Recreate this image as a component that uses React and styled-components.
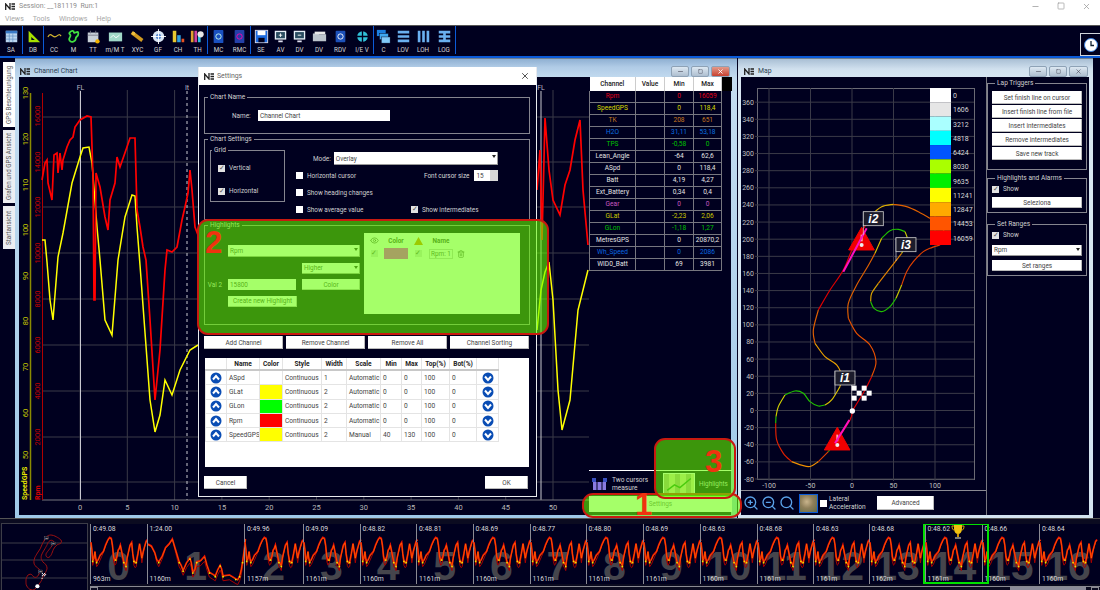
import React from "react";
import styled, { createGlobalStyle } from "styled-components";
import { Eye, Trash2, ZoomIn, ZoomOut, Search, X, Minus, Square } from "lucide-react";

const NAVY = "#00001f";
const LINE = "#85858f";

const GlobalStyle = createGlobalStyle`
  html, body { margin: 0; padding: 0; background: ${NAVY}; }
  body { font-family: Roboto, "Noto Sans", sans-serif; font-size: 6.4px; color: #d8d8d8; }
  fieldset { margin: 0; min-width: 0; }
`;

const Page = styled.div`
  position: relative;
  width: 1100px;
  height: 590px;
  overflow: hidden;
  display: flex;
  flex-direction: column;
  background: ${NAVY};
`;

/* ---------- top chrome ---------- */
const TitleBar = styled.div`
  flex: none;
  height: 12px;
  background: #fff;
  display: flex;
  align-items: center;
  padding: 0 0 0 5px;
  gap: 4px;
  color: #8d8d8d;
  font-size: 7px;
`;
const WinControls = styled.div`
  margin-left: auto;
  display: flex;
  gap: 17px;
  padding-right: 9px;
  color: #999;
`;
const MenuBar = styled.div`
  flex: none;
  height: 13px;
  background: #fff;
  display: flex;
  align-items: center;
  gap: 9px;
  padding-left: 5px;
  color: #a8a8a8;
  font-size: 7px;
`;
const Toolbar = styled.div`
  flex: none;
  box-sizing: content-box;
  height: 30px;
  display: flex;
  background: ${NAVY};
  border-top: 1px solid #555;
  border-bottom: 2px solid #0b5bd8;
`;
const ToolGroup = styled.div`
  display: flex;
  border-right: 1px solid #0b5bd8;
  height: 28px;
`;
const Tool = styled.div`
  width: ${(p) => p.$w}px;
  display: flex;
  flex-direction: column;
  align-items: center;
  padding-top: 3px;
  gap: 2px;
  color: #d5d5d5;
  font-size: 6.3px;
  line-height: 8px;
  white-space: nowrap;
`;
const ClockButton = styled.div`
  margin-left: auto;
  align-self: flex-end;
  width: 19px;
  height: 21px;
  border: 1px solid #cfd3da;
  border-right: 0;
  display: flex;
  align-items: center;
  justify-content: center;
`;

/* ---------- workspace ---------- */
const Workspace = styled.div`
  flex: none;
  height: 460px;
  display: grid;
  grid-template-columns: 15px 722px 1px 355px 7px;
`;
const TabColumn = styled.div`
  display: flex;
  flex-direction: column;
  gap: 3px;
  padding: 4px 0 0 3px;
`;
const Tab = styled.div`
  writing-mode: vertical-rl;
  transform: rotate(180deg);
  width: 12px;
  height: ${(p) => p.$h}px;
  background: ${(p) => (p.$active ? "#fff" : "#eceef2")};
  color: #555;
  font-size: 6.3px;
  display: flex;
  align-items: center;
  justify-content: center;
  white-space: nowrap;
`;
const Window = styled.div`
  display: flex;
  flex-direction: column;
  padding: 0 ${(p) => p.$pr}px 3px ${(p) => p.$pl}px;
  background: ${(p) =>
    p.$active
      ? "linear-gradient(#8fb0d2 0, #b0cbe6 8px, #c4dcf0 20px, #9fc9e8 100%)"
      : "linear-gradient(#a9bfd4 0, #d0e0ee 10px, #d8e6f2 20px, #d3e3ef 100%)"};
  border-top: 1px solid #6f7f92;
`;
const WindowTitle = styled.div`
  flex: none;
  box-sizing: border-box;
  height: 18px;
  padding: 6px 0 0 ${(p) => p.$pl || 1}px;
  display: flex;
  align-items: center;
  gap: 4px;
  color: #2d3e52;
  font-size: 6.9px;
`;
const WindowButtons = styled.div`
  margin-left: auto;
  display: flex;
  gap: 2px;
  margin-right: 1px;
`;
const WindowButton = styled.div`
  width: ${(p) => (p.$wide ? 19 : 18)}px;
  height: 11px;
  border-radius: 2px;
  border: 1px solid #8ea2b6;
  box-sizing: border-box;
  background: ${(p) => (p.$close ? "linear-gradient(#e49a8a,#c8412f)" : "linear-gradient(#dde8f2,#aebfd0)")};
  color: ${(p) => (p.$close ? "#fff" : "#445")};
  display: flex;
  align-items: center;
  justify-content: center;
`;
const WindowBody = styled.div`
  flex: 1;
  min-height: 0;
  display: flex;
  background: ${NAVY};
`;
const ChartCanvas = styled.svg`
  width: 570px;
  height: 438px;
  display: block;
  flex: none;
`;
const ChannelPanel = styled.div`
  flex: 1;
  display: flex;
  flex-direction: column;
`;
const ChannelTable = styled.table`
  border-collapse: collapse;
  table-layout: fixed;
  width: 142px;
  font-size: 6.6px;
  th {
    height: 13.5px;
    background: #fff;
    color: #222;
    font-weight: 500;
    padding: 0;
    border-right: 1px solid #ccc;
  }
  td {
    height: 11px;
    padding: 0;
    text-align: center;
    border: 1px solid #77777f;
    border-top: 0;
    white-space: nowrap;
  }
`;
const BlackHead = styled.th`
  && {
    background: #000;
    border: 0;
  }
`;
const ChannelCell = styled.td`
  && {
    color: ${(p) => p.$c};
  }
`;
const PanelFoot = styled.div`
  margin-top: auto;
  display: flex;
  flex-direction: column;
`;
const FootRow = styled.div`
  height: 25px;
  border-top: 1px solid #fff;
  display: flex;
  align-items: center;
  padding-left: 2px;
  gap: 4px;
  line-height: 8px;
  color: #d5d5d5;
`;
const TwoCursorsLabel = styled.span`
  width: 41px;
  white-space: nowrap;
  font-size: 6.6px;
`;
const HighlightsThumb = styled.svg`
  margin-left: 6px;
  width: 32px;
  height: 22px;
  flex: none;
  background: repeating-linear-gradient(90deg, #b8a890 0 5px, #e8d8b0 5px 11px);
  border: 1px solid #fff;
  box-sizing: border-box;
`;
const SettingsButton = styled.div`
  height: 16px;
  margin: 0 0 3px 0;
  background: #fff;
  color: #777;
  display: flex;
  align-items: center;
  justify-content: center;
`;

/* ---------- map window ---------- */
const MapColumn = styled.div`
  width: 245px;
  display: flex;
  flex-direction: column;
`;
const MapCanvas = styled.svg`
  width: 245px;
  height: 413px;
  display: block;
`;
const MapTools = styled.div`
  flex: 1;
  border-top: 1px solid #8a8a92;
  display: flex;
  align-items: center;
  padding-left: 2px;
  gap: 2px;
  color: #5aa2ea;
`;
const SatThumb = styled.div`
  width: 17px;
  height: 17px;
  margin-left: 2px;
  border: 1px solid #0b5bd8;
  background: radial-gradient(circle at 40% 40%, #c9b48c 0, #8f7f5a 45%, #5f6a48 100%);
`;
const LateralLabel = styled.div`
  width: 46px;
  color: #d5d5d5;
  line-height: 8px;
  font-size: 6.6px;
`;
const SidePanel = styled.div`
  flex: 1;
  border-left: 1px solid #77777f;
  padding: 1px 2px 0 0;
  display: flex;
  flex-direction: column;
  gap: 3px;
`;
const Group = styled.fieldset`
  border: 1px solid ${LINE};
  padding: ${(p) => p.$pad || "3px 4px"};
  margin-top: ${(p) => p.$mt ?? 0}px;
  height: ${(p) => (p.$h ? `${p.$h}px` : "auto")};
  box-sizing: border-box;
  display: flex;
  flex-direction: column;
  gap: ${(p) => p.$gap ?? 0}px;
  legend {
    padding: 0 2px;
    margin-left: 3px;
    font-size: 6.6px;
    line-height: 10px;
    color: #d0d0d0;
  }
`;
const GridBox = styled(Group)`
  width: 75px;
  margin-left: 5px;
  legend {
    margin-left: 1px;
  }
`;
const Btn = styled.div`
  flex: ${(p) => (p.$grow ? 1 : "none")};
  height: ${(p) => p.$h || 13}px;
  width: ${(p) => (p.$w ? `${p.$w}px` : "auto")};
  background: #fff;
  box-shadow: inset -1px -1px 0 #bbb;
  color: #444;
  font-size: 6.4px;
  display: flex;
  align-items: center;
  justify-content: center;
  white-space: nowrap;
`;
const CheckRow = styled.div`
  display: flex;
  align-items: center;
  gap: 4px;
  height: 10px;
  color: #cfcfcf;
  white-space: nowrap;
`;
const Box = styled.span`
  width: 7px;
  height: 7px;
  flex: none;
  box-sizing: border-box;
  background: ${(p) => (p.$checked ? "#e2e2e2" : "#fff")};
  color: #555;
  font-size: 7px;
  line-height: 7px;
  text-align: center;
  &::after {
    content: "${(p) => (p.$checked ? "✓" : "")}";
  }
`;
const Select = styled.div`
  position: relative;
  height: ${(p) => p.$h || 11}px;
  width: ${(p) => (p.$w ? `${p.$w}px` : "auto")};
  background: #fff;
  color: #444;
  display: flex;
  align-items: center;
  padding-left: 2px;
  box-sizing: border-box;
  box-shadow: inset -1px -1px 0 #999;
  &::after {
    content: "";
    position: absolute;
    right: 2px;
    top: 3px;
    border: 2.5px solid transparent;
    border-top: 3px solid #222;
    border-bottom: 0;
  }
`;

/* ---------- settings dialog ---------- */
const Dialog = styled.div`
  position: absolute;
  left: 198px;
  top: 67px;
  width: 339px;
  height: 430px;
  background: ${NAVY};
  border: 1px solid #e8eaee;
  border-top: 0;
  box-sizing: border-box;
  display: flex;
  flex-direction: column;
`;
const DialogTitle = styled.div`
  height: 18px;
  flex: none;
  background: #fff;
  color: #666;
  display: flex;
  align-items: center;
  gap: 3px;
  padding: 0 6px 0 5px;
  font-size: 6.9px;
`;
const DialogClose = styled.span`
  margin-left: auto;
  color: #333;
  line-height: 0;
`;
const DialogBody = styled.div`
  flex: 1;
  padding: 7px 6px 0 5px;
  display: flex;
  flex-direction: column;
`;
const Label = styled.span`
  color: #d0d0d0;
  text-align: ${(p) => p.$align || "left"};
  width: ${(p) => (p.$w ? `${p.$w}px` : "auto")};
  white-space: nowrap;
`;
const TextInput = styled.div`
  height: ${(p) => p.$h || 11}px;
  width: ${(p) => p.$w}px;
  background: #fff;
  color: #444;
  display: flex;
  align-items: center;
  padding-left: 2px;
  box-sizing: border-box;
`;
const NameRow = styled.div`
  display: flex;
  align-items: center;
  gap: 4px;
  padding: 8px 0 0 27px;
`;
const SettingsRow = styled.div`
  display: flex;
  margin-top: 1px;
`;
const GridChecks = styled.div`
  display: flex;
  flex-direction: column;
  gap: 13px;
  padding: 8px 0 0 7px;
`;
const SettingsGrid = styled.div`
  margin-left: 11px;
  width: 201px;
  display: grid;
  grid-template-columns: 115px 1fr;
  align-items: center;
  grid-auto-rows: 17px;
  padding-top: 5px;
`;
const ModeRow = styled.div`
  grid-column: 1 / 3;
  display: flex;
  align-items: center;
  gap: 3px;
  padding-left: 17px;
`;
const CursorSize = styled.div`
  display: flex;
  align-items: center;
  gap: 5px;
  margin-left: 13px;
  white-space: nowrap;
`;
const Spin = styled.div`
  width: 24px;
  height: 11px;
  background: #fff;
  color: #444;
  flex: none;
  padding-left: 2px;
  box-sizing: border-box;
  display: flex;
  align-items: center;
  border-right: 8px solid #d8d8d8;
`;
const HighlightsRow = styled.div`
  display: flex;
  gap: 4px;
  padding: 3px 0 0 0;
`;
const HighlightsForm = styled.div`
  width: 155px;
  display: flex;
  flex-direction: column;
  padding-top: 12px;
  gap: 5.5px;
`;
const FormRow = styled.div`
  display: flex;
  align-items: center;
  justify-content: ${(p) => (p.$end ? "flex-end" : "flex-start")};
  gap: ${(p) => p.$gap ?? 0}px;
  margin-left: ${(p) => p.$ml ?? 0}px;
`;
const RuleBox = styled.div`
  width: 156px;
  height: 81px;
  background: #fff;
  color: #555;
`;
const RuleGrid = styled.div`
  display: grid;
  grid-template-columns: 20px 24px 20px 26px 14px;
  grid-auto-rows: 13px;
  align-items: center;
  justify-items: center;
  padding-top: 1px;
`;
const RuleHead = styled.span`
  font-weight: 700;
  color: #444;
`;
const Swatch = styled.div`
  width: 100%;
  height: 11px;
  background: ${(p) => p.$c};
`;
const NameField = styled.div`
  border: 1px solid #ccc;
  padding: 0 1px;
  white-space: nowrap;
`;
const ButtonRow = styled.div`
  margin-top: 11px;
  display: flex;
  gap: 3px;
  padding-right: 1px;
`;
const TableWrap = styled.div`
  margin: 9px 0 0 1px;
  height: 109px;
  width: 324px;
  background: #fff;
  flex: none;
`;
const SeriesTable = styled.table`
  border-collapse: collapse;
  table-layout: fixed;
  width: 293px;
  color: #444;
  font-size: 6.6px;
  th {
    height: 11px;
    padding: 0;
    color: #222;
    font-weight: 700;
    text-align: center;
    border-right: 1px solid #e4e4e4;
    border-bottom: 2px solid #c8c8c8;
  }
  td {
    height: 13.3px;
    padding: 0 0 0 2px;
    white-space: nowrap;
    overflow: hidden;
    border: 1px solid #e4e4e4;
  }
`;
const ColorCell = styled.td`
  && {
    background: ${(p) => p.$c};
  }
`;
const ArrowCell = styled.td`
  && {
    padding: 0;
    text-align: center;
    line-height: 0;
  }
`;
const DialogFoot = styled.div`
  margin-top: 9px;
  display: flex;
  justify-content: space-between;
  padding-right: 2px;
`;

/* ---------- callouts laid over the screenshot ---------- */
const Callout = styled.div`
  position: absolute;
  left: ${(p) => p.$x}px;
  top: ${(p) => p.$y}px;
  width: ${(p) => p.$w}px;
  height: ${(p) => p.$h}px;
  box-sizing: border-box;
  border: 2px solid #c81a10;
  border-radius: 11px;
  background: rgba(102, 255, 0, 0.59);
`;
const CalloutNumber = styled.span`
  position: absolute;
  left: ${(p) => p.$x}px;
  top: ${(p) => p.$y}px;
  color: #f0320f;
  font-family: "Liberation Sans", Arial, sans-serif;
  font-weight: 700;
  font-size: 31px;
  line-height: 31px;
`;

/* ---------- bottom lap strip ---------- */
const BottomStrip = styled.div`
  flex: none;
  box-sizing: border-box;
  height: 72px;
  overflow: hidden;
  display: flex;
  gap: 3px;
  padding: 5px 0 0 2px;
  border-top: 1px solid #555;
  background: #0b0b20;
`;
const MiniTrack = styled.svg`
  width: 85px;
  height: 67px;
  flex: none;
  background: ${NAVY};
  box-shadow: 0 0 0 1px #3d3d48;
`;
const LapColumn = styled.div`
  flex: 1;
  min-width: 0;
  display: flex;
  flex-direction: column;
  gap: 2px;
  overflow: hidden;
`;
const LapRow = styled.div`
  display: flex;
  flex: none;
  height: 60px;
  background: ${NAVY};
`;
const Lap = styled.div`
  position: relative;
  flex: none;
  width: ${(p) => p.$w}px;
  height: 60px;
  box-sizing: border-box;
  border-left: 1px solid #8a8a92;
  padding: 1px 0 1px 2px;
  display: flex;
  flex-direction: column;
  justify-content: space-between;
  color: #d8d8d8;
  font-size: 6.8px;
  line-height: 8px;
`;
const LapNumber = styled.span`
  position: absolute;
  left: 0;
  right: 0;
  bottom: -3px;
  text-align: center;
  color: #45454c;
  font-family: "Liberation Sans", Arial, sans-serif;
  font-weight: 700;
  font-size: 41px;
  line-height: 41px;
`;
const LapTrace = styled.svg`
  position: absolute;
  left: 0;
  top: 0;
  width: 100%;
  height: 100%;
  overflow: visible;
`;
const LapText = styled.span`
  position: relative;
  z-index: 1;
`;
const BestBox = styled.div`
  position: absolute;
  left: -3px;
  top: -1px;
  width: 66px;
  height: 61px;
  box-sizing: border-box;
  border: 2px solid #00e000;
  z-index: 2;
`;
const TrophyIcon = styled.svg`
  position: absolute;
  left: 26px;
  top: -1px;
`;
const ScrollTrack = styled.div`
  flex: none;
  height: 5px;
  border-top: 1px solid #8a8a92;
  display: flex;
  justify-content: space-between;
  padding-right: 1px;
`;
const ScrollEnd = styled.div`
  width: 8px;
  border: 1px solid #8a8a92;
  border-bottom: 0;
  box-sizing: border-box;
`;
const ScrollThumb = styled.div`
  width: 76px;
  margin-left: auto;
  margin-right: 5px;
  background: #8a8a98;
`;

/* ---------- small drawings ---------- */
const Logo = ({ color = "#222" }) => (
  <svg width="10" height="7" viewBox="0 0 10 7" fill="none" stroke={color} strokeWidth="1.3">
    <path d="M.7 7V1L5 6V0" />
    <path d="M6.5 1H10M6.5 3.5H10M6.5 6H10" />
  </svg>
);

const shapes = {
  SA: (<><rect x="2" y="2" width="13" height="13" fill="#bcd6f0" /><rect x="2" y="2" width="13" height="3" fill="#3a7ac8" /><path d="M2 8h13M2 11.500h13M6 5v10M10 5v10" stroke="#5a8ac0" strokeWidth=".7" /></>),
  DB: (<><path d="M3 2v13h13z" fill="#a8e000" /><path d="M6 9v3.500h4z" fill="#00001f" /></>),
  CC: (<path d="M1 9c3-6 5 0 8 0s4-5 7-1" stroke="#d8b830" strokeWidth="1.300" fill="none" />),
  M: (<path d="M4 4c3-3 5-2 5 0s5-3 5 1-3 3-3 6-5 5-7 2 2-4 1-6-2-2-1-3z" stroke="#40e040" strokeWidth="2" fill="none" />),
  TT: (<><rect x="2" y="4" width="12" height="11" fill="#c8d0d8" /><path d="M2 7h12M5 2v3M11 2v3" stroke="#778" /><circle cx="13" cy="14" r="2.500" fill="#f0b000" /></>),
  MMT: (<><rect x="1" y="4" width="15" height="10" fill="#a0d8c8" /><path d="M3 10l3-3 3 3 4-3" stroke="#fff" fill="none" /></>),
  XYC: (<><path d="M2 4l12 9" stroke="#d09a20" strokeWidth="4" /><circle cx="4" cy="5" r="2" fill="#f0c040" /></>),
  GF: (<><circle cx="8.500" cy="8.500" r="6.500" fill="#d8e4f4" /><circle cx="8.500" cy="8.500" r="3" fill="#5a8ad0" /><path d="M8.500 0v17M0 8.500h17" stroke="#fff" /></>),
  CH: (<><rect x="2" y="2" width="4" height="13" fill="#e8c830" /><rect x="7" y="7" width="4" height="8" fill="#30a0e0" /><rect x="12" y="11" width="3" height="4" fill="#e85020" /></>),
  TH: (<><rect x="1" y="2" width="3" height="13" fill="#e0a030" /><rect x="5" y="2" width="3" height="13" fill="#d040a0" /><rect x="9" y="6" width="3" height="9" fill="#30c0e0" /><circle cx="12" cy="6" r="3.500" fill="#e8e8e8" /></>),
  MC: (<><rect x="3" y="1" width="11" height="15" rx="1" fill="#1a50c0" /><circle cx="8.500" cy="8.500" r="3" stroke="#cfe" fill="none" /></>),
  RMC: (<><rect x="3" y="1" width="11" height="15" rx="1" fill="#2440a8" /><circle cx="8.500" cy="8.500" r="3" stroke="#f0a" fill="none" /></>),
  SE: (<><rect x="1.500" y="1.500" width="14" height="14" fill="#1c6ae0" stroke="#dde" /><rect x="4" y="2" width="9" height="5" fill="#fff" /><rect x="5" y="10" width="7" height="5" fill="#00001f" /></>),
  AV: (<><rect x="2" y="2" width="13" height="10" fill="#e8f0f8" /><rect x="3.500" y="3.500" width="10" height="7" fill="#2a4c60" /><path d="M8.500 5v4M6.500 7h4" stroke="#fff" /><path d="M6 14h5" stroke="#dde" strokeWidth="2" /></>),
  DV: (<><rect x="2" y="2" width="13" height="10" fill="#e8f0f8" /><rect x="3.500" y="3.500" width="10" height="7" fill="#2a4c60" /><path d="M6.500 7h4" stroke="#fff" /><path d="M6 14h5" stroke="#dde" strokeWidth="2" /></>),
  FO: (<><path d="M1 5h6l1 1h8v8H1z" fill="#bcc4cc" /><rect x="3" y="3" width="12" height="3" fill="#e8e8e8" /></>),
  RDV: (<><rect x="3" y="2" width="11" height="13" rx="1" fill="#1c50b8" /><circle cx="8.500" cy="8.500" r="3" stroke="#fff" fill="none" /></>),
  IEV: (<><circle cx="8.500" cy="8.500" r="6" fill="#30c0d8" /><path d="M8.500 1v15M2 8.500h13" stroke="#00001f" strokeWidth="1.500" /></>),
  C: (<><rect x="1" y="1" width="10" height="7" fill="#1c80e0" /><rect x="4" y="5" width="10" height="7" fill="#40a8f0" stroke="#00001f" strokeWidth=".5" /><rect x="6" y="9" width="10" height="7" fill="#80c8f8" stroke="#00001f" strokeWidth=".5" /></>),
  LOV: (<path d="M2 3.500h13M2 8.500h13M2 13.500h13" stroke="#6ab0f0" strokeWidth="3" />),
  LOH: (<path d="M3.500 2v13M8.500 2v13M13.500 2v13" stroke="#6ab0f0" strokeWidth="3" />),
  LOG: (<path d="M2 3.500h13M2 8.500h13M2 13.500h13M8.500 2v13" stroke="#6ab0f0" strokeWidth="3" />),
};

const toolGroups = [
  [["SA", "SA", 22]],
  [["DB", "DB", 20]],
  [["CC", "CC", 20], ["M", "M", 19], ["TT", "TT", 20], ["m/M T", "MMT", 24], ["XYC", "XYC", 21], ["GF", "GF", 20], ["CH", "CH", 20], ["TH", "TH", 19]],
  [["MC", "MC", 21], ["RMC", "RMC", 21]],
  [["SE", "SE", 20], ["AV", "AV", 19], ["DV", "DV", 19], ["DV", "FO", 20], ["RDV", "RDV", 22], ["I/E V", "IEV", 22]],
  [["C", "C", 19], ["LOV", "LOV", 20], ["LOH", "LOH", 20], ["LOG", "LOG", 22]],
];

const ArrowDot = ({ down }) => (
  <svg width="12" height="12" viewBox="0 0 12 12">
    <circle cx="6" cy="6" r="5.500" fill="#0a4db4" />
    <path d={down ? "M3 4.500L6 8l3-3.500" : "M3 7.500L6 4l3 3.500"} fill="none" stroke="#fff" strokeWidth="2" />
  </svg>
);

/* smooth line through points, used for the track */
const smooth = (pts) => {
  let d = `M${pts[0][0]} ${pts[0][1]}`;
  for (let i = 0; i < pts.length - 1; i++) {
    const p0 = pts[i - 1] || pts[i];
    const p1 = pts[i];
    const p2 = pts[i + 1];
    const p3 = pts[i + 2] || p2;
    const c1 = [p1[0] + (p2[0] - p0[0]) / 6, p1[1] + (p2[1] - p0[1]) / 6];
    const c2 = [p2[0] - (p3[0] - p1[0]) / 6, p2[1] - (p3[1] - p1[1]) / 6];
    d += `C${c1[0]} ${c1[1]} ${c2[0]} ${c2[1]} ${p2[0]} ${p2[1]}`;
  }
  return d;
};
const line = (pts) => pts.map((p) => p.join(",")).join(" ");

/* ---------- chart data ---------- */
const redLeft = [[42,180],[45,163],[47,160],[48,183],[52,200],[53,177],[54,155],[57,153],[58,173],[60,153],[62,170],[63,160],[67,147],[70,140],[73,137],[75,127],[80,120],[87,116],[91,117],[93,177],[94,300],[95,300],[96,173],[100,187],[105,217],[108,230],[110,200],[115,183],[117,157],[120,167],[127,147],[130,138],[135,138],[137,210],[140,227],[143,247],[146,260],[150,320],[155,400],[160,350],[165,270],[167,250],[172,252],[177,247],[182,220],[185,207],[188,193],[190,170],[192,190],[195,227],[198,235]];
const redRight = [[537,190],[540,150],[542,240],[545,118],[549,170],[553,200],[560,215],[565,185],[570,170],[575,140],[580,120],[583,190],[588,245]];
const yellowLeft = [[42,240],[45,240],[47,262],[50,300],[53,320],[58,257],[63,233],[72,183],[80,157],[83,148],[89,147],[92,163],[97,227],[100,260],[105,320],[112,335],[118,260],[125,217],[132,195],[135,196],[137,227],[140,265],[150,400],[155,432],[160,415],[165,380],[172,395],[180,370],[190,350],[198,345]];
const yellowRight = [[537,330],[541,290],[545,272],[549,262],[553,300],[558,390],[562,430],[570,400],[578,310],[588,270]];
const yellowTicks = [[130,93],[120,139],[110,185],[100,230],[90,276],[80,321],[70,367],[60,413],[50,455]];
const redTicks = [[16000,116],[14000,162],[12000,207],[10000,253],[8000,299],[6000,345],[4000,391],[2000,437]];
const xTicks = [0,5,10,15,20,25,30,35,40,45,50];

const ChannelChart = () => (
  <ChartCanvas viewBox="19 77 570 438" fontFamily="Roboto, sans-serif">
    {[117,162,207,253,299,345,391,437,482].map((y) => (
      <line key={y} x1="42" x2="589" y1={y} y2={y} stroke="#3a3a48" />
    ))}
    {xTicks.map((t) => (
      <line key={t} x1={80 + t * 9.46} x2={80 + t * 9.46} y1="90" y2="500" stroke="#3a3a48" />
    ))}
    <line x1="80.500" x2="80.500" y1="91" y2="500" stroke="#c8c8d0" />
    <line x1="541" x2="541" y1="91" y2="500" stroke="#c8c8d0" />
    <line x1="187" x2="187" y1="91" y2="500" stroke="#c8c8d0" strokeDasharray="3 3" />
    <text x="80.500" y="90" textAnchor="middle" fontSize="7" fill="#b8b8c8">FL</text>
    <text x="187" y="90" textAnchor="middle" fontSize="7" fill="#b8b8c8">It</text>
    <text x="541" y="90" textAnchor="middle" fontSize="7" fill="#b8b8c8">FL</text>
    <line x1="42" x2="589" y1="500" y2="500" stroke="#77777f" />
    <line x1="30.500" x2="30.500" y1="93" y2="500" stroke="#8a8a00" strokeWidth="1.500" />
    <line x1="42.500" x2="42.500" y1="93" y2="500" stroke="#b00000" />
    {yellowTicks.map(([v, y]) => (
      <text key={v} transform={`rotate(-90 28 ${y})`} x="28" y={y} textAnchor="middle" fontSize="7.500" fill="#c8c800">{v}</text>
    ))}
    {redTicks.map(([v, y]) => (
      <text key={v} transform={`rotate(-90 40 ${y})`} x="40" y={y} textAnchor="middle" fontSize="7.500" fill="#c00000">{v}</text>
    ))}
    {xTicks.map((t) => (
      <text key={t} x={80 + t * 9.46} y="510" textAnchor="middle" fontSize="7.500" fill="#b8b8b8">{t}</text>
    ))}
    <text transform="rotate(-90 27 500)" x="27" y="500" fontSize="7" fontWeight="700" fill="#e8e800">SpeedGPS</text>
    <text transform="rotate(-90 40 500)" x="40" y="500" fontSize="7" fontWeight="700" fill="#e00000">Rpm</text>
    <polyline points={line(yellowLeft)} fill="none" stroke="#ffff00" strokeWidth="1.500" />
    <polyline points={line(yellowRight)} fill="none" stroke="#ffff00" strokeWidth="1.500" />
    <polyline points={line(redLeft)} fill="none" stroke="#ff0000" strokeWidth="1.700" />
    <polyline points={line(redRight)} fill="none" stroke="#ff0000" strokeWidth="1.700" />
  </ChartCanvas>
);

const channels = [
  ["Rpm", "0", "16059", "#e00018"],
  ["SpeedGPS", "0", "118,4", "#d8d800"],
  ["TK", "208", "651", "#c87820"],
  ["H2O", "31,11", "53,18", "#0a70e0"],
  ["TPS", "-0,58", "0", "#00c000"],
  ["Lean_Angle", "-64", "62,6", "#e4e4e4"],
  ["ASpd", "0", "118,4", "#e4e4e4"],
  ["Batt", "4,19", "4,27", "#e4e4e4"],
  ["Ext_Battery", "0,34", "0,4", "#e4e4e4"],
  ["Gear", "0", "0", "#c858c0"],
  ["GLat", "-2,23", "2,06", "#c8c800"],
  ["GLon", "-1,18", "1,27", "#00c000"],
  ["MetresGPS", "0", "20870,2", "#e4e4e4"],
  ["Wh_Speed", "0", "2086", "#0a68e0"],
  ["WID0_Batt", "69", "3981", "#e4e4e4"],
];

/* ---------- map data (coordinates of a 3x crop, origin 750,190) ---------- */
const trackRuns = [
  ["#e00000", [[307,663],[345,600],[365,560]]],
  ["#e85000", [[365,560],[378,515],[360,465],[320,430],[295,385]]],
  ["#e06000", [[295,385],[295,340],[320,285],[350,235],[375,190]]],
  ["#d8c000", [[375,190],[395,145]]],
  ["#20c000", [[395,145],[420,122],[445,118],[465,125]]],
  ["#c8c800", [[465,125],[472,150],[455,190]]],
  ["#e08000", [[455,190],[420,235],[385,280]]],
  ["#d8a000", [[385,280],[365,310],[362,335]]],
  ["#20c000", [[362,335],[372,355],[395,365],[420,350],[438,325]]],
  ["#c8c800", [[438,325],[455,285]]],
  ["#e04000", [[455,285],[470,245],[490,215],[520,185],[540,175],[570,165]]],
  ["#e04000", [[570,165],[585,130],[560,100],[540,85]]],
  ["#e06000", [[540,85],[510,68],[470,50],[430,43]]],
  ["#e0b000", [[430,43],[395,50],[365,75],[350,100]]],
  ["#e00000", [[350,100],[310,170],[280,240],[240,300],[205,360]]],
  ["#e06000", [[205,360],[190,420],[195,460]]],
  ["#e8a000", [[195,460],[225,500],[260,525],[275,560],[270,590]]],
  ["#d8c000", [[270,590],[245,630],[225,645]]],
  ["#20c000", [[225,645],[205,648],[180,635],[160,610],[135,603],[105,615]]],
  ["#d0d000", [[105,615],[85,650],[78,680]]],
  ["#20c000", [[78,680],[77,700]]],
  ["#e02000", [[77,700],[80,750],[100,790],[125,815]]],
  ["#f09000", [[125,815],[175,830],[205,815]]],
  ["#e04000", [[205,815],[235,785]]],
  ["#20c000", [[235,785],[255,760]]],
  ["#e00000", [[255,760],[300,690],[307,663]]],
];

const TrackLine = ({ width, color }) =>
  trackRuns.map(([c, pts], i) => (
    <path key={i} d={smooth(pts)} fill="none" stroke={color || c} strokeWidth={width} />
  ));

const Flag = ({ x, y, label }) => (
  <g>
    <path d={`M${x} ${y}v70`} stroke="#ddd" strokeWidth="2" />
    <rect x={x} y={y} width="60" height="42" fill="#1c1c2c" stroke="#c8c8c8" strokeWidth="2.500" />
    <text x={x + 30} y={y + 33} textAnchor="middle" fontFamily="Liberation Sans, sans-serif" fontStyle="italic" fontWeight="700" fontSize="36" fill="#fff">{label}</text>
  </g>
);

const Checker = () => (
  <g>
    <path d="M305 585v78" stroke="#ddd" strokeWidth="2" />
    {[0, 1, 2].map((r) =>
      [0, 1, 2, 3].map((c) =>
        (r + c) % 2 === 0 ? (
          <rect key={`${r}${c}`} x={305 + c * 15} y={587 + r * 15} width="15" height="15" fill="#fff" />
        ) : null
      )
    )}
    <circle cx="307" cy="663" r="8" fill="#fff" />
  </g>
);

const Warning = ({ x, y }) => (
  <g>
    <path d={`M${x} ${y}L${x + 38} ${y + 68}H${x - 39}z`} fill="#f00000" stroke="#f00000" strokeWidth="3" strokeLinejoin="round" />
    <rect x={x - 3} y={y + 22} width="6" height="20" fill="#f8b0b0" />
    <circle cx={x} cy={y + 53} r="6" fill="#eee" />
  </g>
);

const legend = [
  ["#ffffff", "0"], ["#e6e6e6", "1606"], ["#aaffff", "3212"], ["#00ffff", "4818"],
  ["#0055ff", "6424"], ["#aaff00", "8030"], ["#00ee00", "9635"], ["#ffff00", "11241"],
  ["#ffaa00", "12847"], ["#ff5500", "14453"], ["#ff0000", "16059"],
];
const mapY = Array.from({ length: 23 }, (_, i) => 360 - i * 20);
const yOf = (v) => 410.5 - v * 0.8565;

const TrackMap = () => (
  <MapCanvas viewBox="741 77 245 413" fontFamily="Roboto, sans-serif">
    <rect x="757.500" y="88.500" width="217" height="391" fill="none" stroke="#6a6a74" />
    {mapY.map((v) => (
      <g key={v}>
        <line x1="755" x2="974" y1={yOf(v)} y2={yOf(v)} stroke="#3a3a48" />
        <text x="754" y={yOf(v) + 2.500} textAnchor="end" fontSize="7" fill="#c0c0c0">{v}</text>
      </g>
    ))}
    {[-100, -50, 0, 50, 100].map((v) => (
      <g key={v}>
        <line x1={852 + v * 0.83} x2={852 + v * 0.83} y1="88" y2="481" stroke="#3a3a48" />
        <text x={852 + v * 0.83} y="488" textAnchor="middle" fontSize="7" fill="#c0c0c0">{v}</text>
      </g>
    ))}
    <g transform="translate(750 190) scale(.3333)">
      <TrackLine width="3.500" />
      <Warning x={335} y={112} />
      <Warning x={262} y={712} />
      <path d="M350 115L280 245M298 690L255 760" stroke="#ff10c0" strokeWidth="6" />
      <Flag x={255} y={543} label="i1" />
      <Flag x={340} y={65} label="i2" />
      <Flag x={438} y={143} label="i3" />
      <Checker />
    </g>
    {legend.map(([c, v], i) => (
      <g key={v}>
        <rect x="930" y={88 + i * 14.27} width="21" height="14.300" fill={c} />
        <text x="953" y={98 + i * 14.27} fontSize="7" fill="#d8d8d8">{v}</text>
      </g>
    ))}
  </MapCanvas>
);

/* ---------- lap strip data ---------- */
const lapProfile = [[0,.2],[.03,.9],[.07,.55],[.1,.95],[.16,.7],[.22,.55],[.3,.1],[.36,.05],[.4,.75],[.44,.85],[.48,.5],[.52,.3],[.58,.95],[.62,1.1],[.66,.6],[.72,.2],[.76,.9],[.8,.95],[.86,.25],[.9,.8],[.95,.35],[1,.1]];
const longLap = [[0,.27],[.07,.6],[.11,.95],[.18,.4],[.25,.07],[.32,.95],[.36,1.28],[.43,.81],[.46,1.35],[.5,.95],[.58,.74],[.63,1.35],[.69,1.49],[.74,1.08],[.77,1.49],[.9,1.6],[.94,1.49],[.97,.95],[1,.07]];

const laps = [
  [0, 56.5, "0:49.08", "963m"], [1, 97.5, "1:24.00", "1160m"], [2, 58.5, "0:49.96", "1157m"],
  [3, 57, "0:49.09", "1161m"], [4, 56.5, "0:48.82", "1160m"], [5, 56.5, "0:48.81", "1161m"],
  [6, 57, "0:48.69", "1160m"], [7, 56, "0:48.77", "1161m"], [8, 57, "0:48.80", "1161m"],
  [9, 57, "0:48.69", "1161m"], [10, 57, "0:48.63", "1160m"], [11, 56.5, "0:48.68", "1161m"],
  [12, 55.5, "0:48.63", "1161m"], [13, 56, "0:48.68", "1162m"], [14, 57, "0:48.62", "1161m"],
  [15, 57.5, "0:48.66", "1160m"], [16, 57, "0:48.64", "1160m"],
];

/* adds a jittered point between neighbours so the trace looks sampled */
const jagged = (pts, seed) =>
  pts.flatMap((p, i) => {
    const next = pts[i + 1];
    if (!next) return [p];
    const jitter = (((i * 13 + seed * 7) % 7) - 3) * 0.8;
    return [p, [(p[0] + next[0]) / 2, (p[1] + next[1]) / 2 + jitter]];
  });

const Trace = ({ w, data, seed }) => {
  const base = data.map(([x, y]) => [x * w, 13 + y * 26]);
  const pts = jagged(base, seed);
  const deep = jagged(base.map(([x, y]) => [x, y + (y > 30 ? 5 : 1)]), seed + 2);
  const low = base.filter(([, y]) => y > 34);
  return (
    <LapTrace>
      <polyline points={line(deep)} fill="none" stroke="#a80000" strokeWidth="1" />
      <polyline points={line(pts)} fill="none" stroke="#f01000" strokeWidth="1.600" />
      <polyline points={line(pts.map(([x, y]) => [x, y + 0.6]))} fill="none" stroke="#ff9000" strokeWidth=".5" />
      {low.map(([x, y], i) => (
        <circle key={i} cx={x} cy={y + 1} r=".9" fill="#e8e800" />
      ))}
    </LapTrace>
  );
};

const Trophy = () => (
  <TrophyIcon width="14" height="17" viewBox="0 0 14 17">
    <path d="M3 1h8v4c0 3-2 5-4 5S3 8 3 5z" fill="#f0c010" />
    <path d="M3 2H1c0 3 1 4 2 4M11 2h2c0 3-1 4-2 4" fill="none" stroke="#d8a800" />
    <rect x="6" y="10" width="2" height="3" fill="#c89000" />
    <rect x="4" y="13" width="6" height="2" fill="#777" />
  </TrophyIcon>
);

const series = [
  ["ASpd", "#fff", "1", "Automatic", "0", "0"],
  ["GLat", "#ffff00", "2", "Automatic", "0", "0"],
  ["GLon", "#00ff00", "2", "Automatic", "0", "0"],
  ["Rpm", "#ff0000", "2", "Automatic", "0", "0"],
  ["SpeedGPS", "#ffff00", "2", "Manual", "40", "130"],
];
const seriesCols = [21, 33, 23, 39, 25, 34, 21, 20, 28, 27, 22];

const App = () => (
  <Page>
    <GlobalStyle />
    <TitleBar>
      <Logo />
      <span>Session: __181119&nbsp;&nbsp;Run:1</span>
      <WinControls>
        <Minus size={9} />
        <Square size={8} />
        <X size={9} />
      </WinControls>
    </TitleBar>
    <MenuBar>
      <span>Views</span>
      <span>Tools</span>
      <span>Windows</span>
      <span>Help</span>
    </MenuBar>
    <Toolbar>
      {toolGroups.map((group, i) => (
        <ToolGroup key={i}>
          {group.map(([label, icon, w], j) => (
            <Tool key={j} $w={w}>
              <svg width="17" height="16" viewBox="0 0 17 17">{shapes[icon]}</svg>
              {label}
            </Tool>
          ))}
        </ToolGroup>
      ))}
      <ClockButton>
        <svg width="14" height="14" viewBox="0 0 14 14">
          <circle cx="7" cy="7" r="6.500" fill="#fff" stroke="#3a80e0" />
          <path d="M7 3v4.500h3" stroke="#123" fill="none" strokeWidth="1.300" />
        </svg>
      </ClockButton>
    </Toolbar>

    <Workspace>
      <TabColumn>
        <Tab $h={65} $active>GPS Beschleunigung</Tab>
        <Tab $h={73}>Grafen und GPS Ansicht</Tab>
        <Tab $h={43}>Startansicht</Tab>
      </TabColumn>

      <Window $active $pl={4} $pr={6}>
        <WindowTitle>
          <Logo />
          Channel Chart
          <WindowButtons>
            <WindowButton><Minus size={7} /></WindowButton>
            <WindowButton><Square size={5} /></WindowButton>
            <WindowButton $close $wide><X size={7} strokeWidth={3} /></WindowButton>
          </WindowButtons>
        </WindowTitle>
        <WindowBody>
          <ChannelChart />
          <ChannelPanel>
            <ChannelTable>
              <colgroup>
                <col width="46" /><col width="29" /><col width="29" /><col width="28" /><col width="10" />
              </colgroup>
              <thead>
                <tr><th>Channel</th><th>Value</th><th>Min</th><th>Max</th><BlackHead /></tr>
              </thead>
              <tbody>
                {channels.map(([name, min, max, c]) => (
                  <tr key={name}>
                    <ChannelCell $c={c}>{name}</ChannelCell>
                    <ChannelCell $c={c}></ChannelCell>
                    <ChannelCell $c={c}>{min}</ChannelCell>
                    <ChannelCell $c={c}>{max}</ChannelCell>
                  </tr>
                ))}
              </tbody>
            </ChannelTable>
            <PanelFoot>
              <FootRow>
                <svg width="17" height="14" viewBox="0 0 17 14">
                  <rect x="2" y="5" width="13" height="8" fill="#8a7ae0" />
                  <rect x="1" y="1" width="4" height="4" fill="#3a50c0" />
                  <rect x="12" y="1" width="4" height="4" fill="#3a50c0" />
                  <path d="M6 5v8M11 5v8" stroke="#00001f" />
                </svg>
                <TwoCursorsLabel>Two cursors<br />measure</TwoCursorsLabel>
                <HighlightsThumb viewBox="0 0 32 22">
                  <polyline points="3,18 11,12 17,15 29,5" fill="none" stroke="#208020" strokeWidth="1.500" />
                </HighlightsThumb>
                <span>Highlights</span>
              </FootRow>
              <SettingsButton>Settings</SettingsButton>
            </PanelFoot>
          </ChannelPanel>
        </WindowBody>
      </Window>

      <div />

      <Window $pl={3} $pr={4}>
        <WindowTitle $pl={3}>
          <Logo />
          Map
          <WindowButtons>
            <WindowButton><Minus size={7} /></WindowButton>
            <WindowButton><Square size={5} /></WindowButton>
            <WindowButton $wide><X size={7} /></WindowButton>
          </WindowButtons>
        </WindowTitle>
        <WindowBody>
          <MapColumn>
            <TrackMap />
            <MapTools>
              <ZoomIn size={16} />
              <ZoomOut size={16} />
              <Search size={16} />
              <SatThumb />
              <Box />
              <LateralLabel>Lateral<br />Acceleration</LateralLabel>
              <Btn $w={57} $h={14}>Advanced</Btn>
            </MapTools>
          </MapColumn>
          <SidePanel>
            <Group $h={92} $pad="3px 4px" $gap={1}>
              <legend>Lap Triggers</legend>
              <Btn $h={13}>Set finish line on cursor</Btn>
              <Btn $h={13}>Insert finish line from file</Btn>
              <Btn $h={13}>Insert intermediates</Btn>
              <Btn $h={13}>Remove intermediates</Btn>
              <Btn $h={13}>Save new track</Btn>
            </Group>
            <Group $h={40} $pad="1px 4px" $gap={3}>
              <legend>Highlights and Alarms</legend>
              <CheckRow><Box $checked />Show</CheckRow>
              <Btn $h={11}>Seleziona</Btn>
            </Group>
            <Group $h={57} $mt={3} $pad="1px 4px" $gap={4.5}>
              <legend>Set Ranges</legend>
              <CheckRow><Box $checked />Show</CheckRow>
              <Select>Rpm</Select>
              <Btn $h={11}>Set ranges</Btn>
            </Group>
          </SidePanel>
        </WindowBody>
      </Window>
      <div />
    </Workspace>

    <BottomStrip>
      <MiniTrack viewBox="0 0 85 67">
        {[19, 36, 54].map((y) => (
          <line key={y} x1="0" x2="85" y1={y} y2={y} stroke="#3d3d48" />
        ))}
        <g transform="translate(18.600 8) scale(.07)">
          <TrackLine width="14" color="#a01010" />
          <Flag x={255} y={543} label="i1" />
          <Flag x={340} y={65} label="i2" />
          <Flag x={438} y={143} label="i3" />
          <Checker />
          <circle cx="240" cy="775" r="30" fill="#fff" />
        </g>
      </MiniTrack>
      <LapColumn>
        <LapRow>
          {laps.map(([n, w, time, dist]) => (
            <Lap key={n} $w={w}>
              <LapNumber>{n}</LapNumber>
              <Trace w={w} data={n === 1 ? longLap : lapProfile} seed={n} />
              <LapText>{time}</LapText>
              <LapText>{dist}</LapText>
              {n === 14 && (
                <BestBox>
                  <Trophy />
                </BestBox>
              )}
            </Lap>
          ))}
        </LapRow>
        <ScrollTrack>
          <ScrollEnd />
          <ScrollThumb />
          <ScrollEnd />
        </ScrollTrack>
      </LapColumn>
    </BottomStrip>

    <Dialog>
      <DialogTitle>
        <Logo />
        Settings
        <DialogClose><X size={10} /></DialogClose>
      </DialogTitle>
      <DialogBody>
        <Group $h={42} $pad="0">
          <legend>Chart Name</legend>
          <NameRow>
            <Label $w={22}>Name:</Label>
            <TextInput $w={132}>Channel Chart</TextInput>
          </NameRow>
        </Group>
        <Group $h={86} $pad="0">
          <legend>Chart Settings</legend>
          <SettingsRow>
            <GridBox $h={57} $pad="0">
              <legend>Grid</legend>
              <GridChecks>
                <CheckRow><Box $checked />Vertical</CheckRow>
                <CheckRow><Box $checked />Horizontal</CheckRow>
              </GridChecks>
            </GridBox>
            <SettingsGrid>
              <ModeRow>
                <Label>Mode:</Label>
                <Select $w={166} $h={13}>Overlay</Select>
              </ModeRow>
              <CheckRow><Box />Horizontal cursor</CheckRow>
              <CursorSize>Font cursor size<Spin>15</Spin></CursorSize>
              <CheckRow><Box />Show heading changes</CheckRow>
              <span />
              <CheckRow><Box />Show average value</CheckRow>
              <CheckRow><Box $checked />Show intermediates</CheckRow>
            </SettingsGrid>
          </SettingsRow>
        </Group>
        <Group $h={105} $pad="0">
          <legend>Highlights</legend>
          <HighlightsRow>
            <HighlightsForm>
              <FormRow $ml={23}><Select $w={132} $h={12}>Rpm</Select></FormRow>
              <FormRow $end><Select $w={58}>Higher</Select></FormRow>
              <FormRow $gap={6}>
                <Label $w={17} $align="right">Val 2</Label>
                <TextInput $w={68}>15800</TextInput>
                <Btn $w={58} $h={11}>Color</Btn>
              </FormRow>
              <FormRow $ml={23}><Btn $w={69} $h={11}>Create new Highlight</Btn></FormRow>
            </HighlightsForm>
            <RuleBox>
              <RuleGrid>
                <Eye size={9} />
                <RuleHead>Color</RuleHead>
                <svg width="9" height="8" viewBox="0 0 9 8"><path d="M4.500 0L9 8H0z" fill="#e88000" /></svg>
                <RuleHead>Name</RuleHead>
                <span />
                <Box $checked />
                <Swatch $c="#ff20e8" />
                <Box $checked />
                <NameField>Rpm: 1</NameField>
                <Trash2 size={8} />
              </RuleGrid>
            </RuleBox>
          </HighlightsRow>
        </Group>
        <ButtonRow>
          <Btn $grow $h={13}>Add Channel</Btn>
          <Btn $grow $h={13}>Remove Channel</Btn>
          <Btn $grow $h={13}>Remove All</Btn>
          <Btn $grow $h={13}>Channel Sorting</Btn>
        </ButtonRow>
        <TableWrap>
          <SeriesTable>
            <colgroup>
              {seriesCols.map((w, i) => <col key={i} width={w} />)}
            </colgroup>
            <thead>
              <tr>
                <th></th><th>Name</th><th>Color</th><th>Style</th><th>Width</th><th>Scale</th>
                <th>Min</th><th>Max</th><th>Top(%)</th><th>Bot(%)</th><th></th>
              </tr>
            </thead>
            <tbody>
              {series.map(([name, color, width, scale, min, max]) => (
                <tr key={name}>
                  <ArrowCell><ArrowDot /></ArrowCell>
                  <td>{name}</td>
                  <ColorCell $c={color} />
                  <td>Continuous</td>
                  <td>{width}</td>
                  <td>{scale}</td>
                  <td>{min}</td>
                  <td>{max}</td>
                  <td>100</td>
                  <td>0</td>
                  <ArrowCell><ArrowDot down /></ArrowCell>
                </tr>
              ))}
            </tbody>
          </SeriesTable>
        </TableWrap>
        <DialogFoot>
          <Btn $w={43} $h={13}>Cancel</Btn>
          <Btn $w={43} $h={13}>OK</Btn>
        </DialogFoot>
      </DialogBody>
    </Dialog>

    <Callout $x={197} $y={219} $w={352} $h={116}>
      <CalloutNumber $x={6} $y={6}>2</CalloutNumber>
    </Callout>
    <Callout $x={582} $y={493} $w={160} $h={25} />
    <CalloutNumber $x={635} $y={489}>1</CalloutNumber>
    <Callout $x={654} $y={438} $w={82} $h={61}>
      <CalloutNumber $x={49} $y={6}>3</CalloutNumber>
    </Callout>
  </Page>
);

export default App;
